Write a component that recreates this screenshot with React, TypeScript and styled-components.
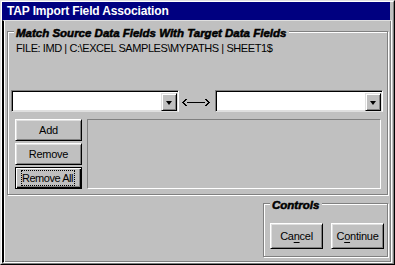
import React from "react";
import styled, { createGlobalStyle } from "styled-components";

const Global = createGlobalStyle`
  html, body { margin: 0; padding: 0; background: #c0c0c0; }
  body { width: 395px; height: 265px; overflow: hidden; font-family: "Liberation Sans", Arial, sans-serif; }
  * { box-sizing: border-box; }
`;

const Window = styled.div`
  width: 395px;
  height: 265px;
  background: #c0c0c0;
  border-top: 1px solid #dfdfdf;
  border-left: 1px solid #dfdfdf;
  border-right: 1px solid #000;
  border-bottom: 1px solid #000;
  display: flex;
`;

const Frame = styled.div`
  flex: 1;
  display: flex;
  flex-direction: column;
  border-top: 1px solid #fff;
  border-left: 1px solid #fff;
  border-right: 1px solid #808080;
  border-bottom: 1px solid #808080;
  padding-right: 1px;
`;

const TitleBar = styled.div`
  height: 18px;
  margin-right: 2px;
  background: #000080;
  color: #fff;
  font-weight: bold;
  font-size: 12px;
  letter-spacing: -0.15px;
  line-height: 18px;
  padding-left: 5px;
  white-space: nowrap;
`;

const Client = styled.div`
  flex: 1;
  display: flex;
  flex-direction: column;
  border-top: 1px solid #dfdfdf;
  border-left: 2px solid #000;
  border-bottom: 1px solid #fff;
  border-right: 1px solid #fff;
  box-shadow: inset 1px 0 0 #fff, inset -1px -1px 0 #808080;
  padding: 10px 0 0 3px;
`;

const Group = styled.div<{ $w: number; $h: number }>`
  position: relative;
  width: ${(p) => p.$w}px;
  height: ${(p) => p.$h}px;
  border: 1px solid #808080;
  box-shadow: inset 1px 1px 0 #fff, 1px 1px 0 #fff;
`;

const MainGroup = styled(Group)`
  padding: 9px 3px 0 3px;
`;

const ControlsGroup = styled(Group)`
  margin: 8px 0 0 256px;
  padding: 19px 0 0 6px;
  display: flex;
  gap: 8px;
`;

const Legend = styled.div`
  position: absolute;
  top: -6px;
  left: 6px;
  padding: 0 3px 0 2px;
  background: #c0c0c0;
  font-size: 11.5px;
  font-weight: bold;
  font-style: italic;
  line-height: 14px;
  color: #000;
  -webkit-text-stroke: 0.55px #000;
  white-space: nowrap;
`;

const FileLine = styled.div`
  margin-left: 5px;
  font-size: 11px;
  letter-spacing: -0.42px;
  line-height: 14px;
  color: #000;
  white-space: nowrap;
`;

const ComboRow = styled.div`
  display: flex;
  align-items: flex-start;
  margin-top: 35px;
`;

const Combo = styled.div`
  width: 168px;
  height: 22px;
  background: #fff;
  border-top: 1px solid #808080;
  border-left: 1px solid #808080;
  border-right: 1px solid #fff;
  border-bottom: 1px solid #dfdfdf;
  box-shadow: inset 1px 1px 0 #000, inset -1px -1px 0 #dfdfdf;
  display: flex;
  justify-content: flex-end;
  padding: 2px 1px 1px 2px;
`;

const DropButton = styled.div`
  width: 16px;
  height: 18px;
  background: #c0c0c0;
  border-top: 1px solid #dfdfdf;
  border-left: 1px solid #dfdfdf;
  border-right: 1px solid #000;
  border-bottom: 1px solid #000;
  box-shadow: inset 1px 1px 0 #fff, inset -1px -1px 0 #808080;
  display: flex;
  align-items: center;
  justify-content: center;
`;

const Triangle = styled.div`
  width: 0;
  height: 0;
  border-left: 3.5px solid transparent;
  border-right: 3.5px solid transparent;
  border-top: 4px solid #000;
  margin-top: 1px;
`;

const ArrowBox = styled.div`
  width: 36px;
  height: 22px;
  display: flex;
  align-items: center;
  padding: 3px 0 0 3px;
`;

const LowerRow = styled.div`
  display: flex;
  margin-top: 7px;
  margin-left: 4px;
  gap: 5px;
`;

const ButtonColumn = styled.div`
  display: flex;
  flex-direction: column;
  gap: 2px;
`;

const Button = styled.button<{ $w: number; $h: number; $default?: boolean }>`
  width: ${(p) => p.$w}px;
  height: ${(p) => p.$h}px;
  margin: 0;
  padding: 0;
  background: #c0c0c0;
  font-family: "Liberation Sans", Arial, sans-serif;
  font-size: 11px;
  letter-spacing: -0.25px;
  color: #000;
  display: flex;
  align-items: center;
  justify-content: center;
  border: 1px solid #000;
  border-top-color: ${(p) => (p.$default ? "#000" : "#fff")};
  border-left-color: ${(p) => (p.$default ? "#000" : "#fff")};
  box-shadow: ${(p) =>
    p.$default
      ? "inset 1px 1px 0 #fff, inset -1px -1px 0 #000, inset -2px -2px 0 #808080"
      : "inset 1px 1px 0 #dfdfdf, inset -1px -1px 0 #808080"};
  u { text-decoration: underline; text-underline-offset: 2px; }
`;

const FocusRect = styled.span`
  border: 1px dotted #000;
  line-height: 14px;
  letter-spacing: -0.45px;
  padding: 0 1px 0 0;
  margin-right: 1px;
`;

const ListBox = styled.div`
  width: 294px;
  height: 70px;
  background: #c0c0c0;
  border-top: 1px solid #808080;
  border-left: 1px solid #808080;
  border-right: 1px solid #fff;
  border-bottom: 1px solid #fff;
`;

const Arrow = () => (
  <svg width="28" height="7" viewBox="0 0 28 7" shapeRendering="crispEdges">
    <path d="M3 0h2v1h-1v1h-1v1h-1v1h1v1h1v1h1v1h-2v-1h-1v-1h-1v-1h-1v-1h1v-1h1v-1h1z" fill="#000" />
    <rect x="5" y="3" width="18" height="1" fill="#000" />
    <path d="M23 0h2v1h1v1h1v1h1v1h-1v1h-1v1h-1v1h-2v-1h1v-1h1v-1h1v-1h-1v-1h-1v-1h-1z" fill="#000" />
  </svg>
);

export default function App() {
  return (
    <>
      <Global />
      <Window>
        <Frame>
          <TitleBar>TAP Import Field Association</TitleBar>
          <Client>
            <MainGroup $w={381} $h={164}>
              <Legend>Match Source Data Fields With Target Data Fields</Legend>
              <FileLine>FILE: IMD | C:\EXCEL SAMPLES\MYPATHS | SHEET1$</FileLine>
              <ComboRow>
                <Combo>
                  <DropButton>
                    <Triangle />
                  </DropButton>
                </Combo>
                <ArrowBox>
                  <Arrow />
                </ArrowBox>
                <Combo>
                  <DropButton>
                    <Triangle />
                  </DropButton>
                </Combo>
              </ComboRow>
              <LowerRow>
                <ButtonColumn>
                  <Button $w={67} $h={22}>Add</Button>
                  <Button $w={67} $h={22}>Remove</Button>
                  <Button $w={67} $h={22} $default>
                    <FocusRect>Remove All</FocusRect>
                  </Button>
                </ButtonColumn>
                <ListBox />
              </LowerRow>
            </MainGroup>
            <ControlsGroup $w={125} $h={54}>
              <Legend>Controls</Legend>
              <Button $w={53} $h={26}>
                <span>
                  Ca<u>n</u>cel
                </span>
              </Button>
              <Button $w={53} $h={26}>
                <span>
                  C<u>o</u>ntinue
                </span>
              </Button>
            </ControlsGroup>
          </Client>
        </Frame>
      </Window>
    </>
  );
}
